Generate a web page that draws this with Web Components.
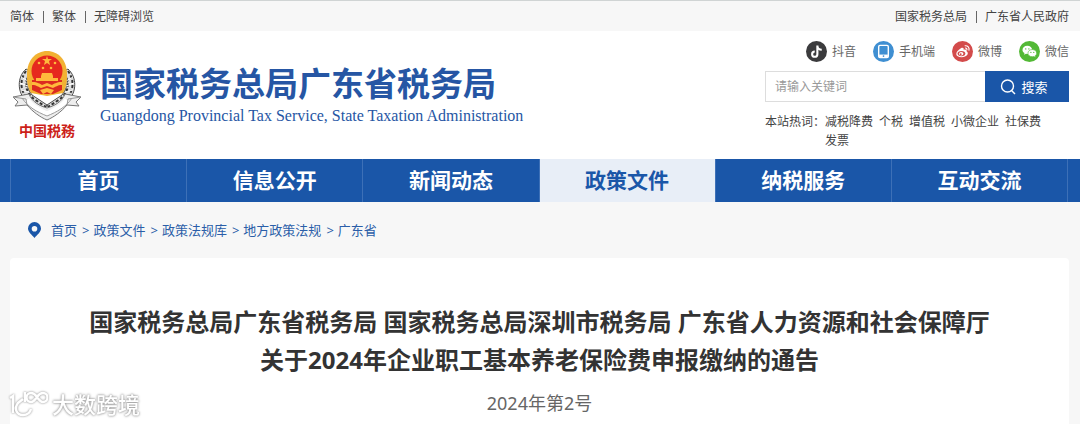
<!DOCTYPE html>
<html lang="zh-CN">
<head>
<meta charset="utf-8">
<meta name="viewport" content="width=device-width, initial-scale=1">
<title>国家税务总局广东省税务局</title>
<style>
    body {
        display: flex;
        flex-direction: column;
        margin: 0;
        min-height: 100vh;
        background-color: #f7f7f7;
        color: #444;
        font-family: "Noto Sans", "Noto Sans CJK SC", sans-serif;
        font-size: 12px;
    }

    a {
        text-decoration: none;
    }

    tax-article {
        flex: 1;
    }
</style>
</head>
<body>
    <tax-topbar>
        <tax-links>
            <a href="#">简体</a>
            <a href="#">繁体</a>
            <a href="#">无障碍浏览</a>
        </tax-links>
        <tax-links>
            <a href="#">国家税务总局</a>
            <a href="#">广东省人民政府</a>
        </tax-links>
    </tax-topbar>

    <tax-header>
        <tax-logo slot="logo">
            国家税务总局广东省税务局
            <span slot="english">Guangdong Provincial Tax Service, State Taxation Administration</span>
        </tax-logo>
        <tax-social icon="douyin" slot="social">抖音</tax-social>
        <tax-social icon="phone" slot="social">手机端</tax-social>
        <tax-social icon="weibo" slot="social">微博</tax-social>
        <tax-social icon="wechat" slot="social">微信</tax-social>
        <tax-search></tax-search>
        <tax-hotwords>
            <a href="#">减税降费</a>
            <a href="#">个税</a>
            <a href="#">增值税</a>
            <a href="#">小微企业</a>
            <a href="#">社保费</a>
            <a href="#">发票</a>
        </tax-hotwords>
    </tax-header>

    <tax-nav>
        <a href="#">首页</a>
        <a href="#">信息公开</a>
        <a href="#">新闻动态</a>
        <a href="#" class="active" aria-current="page">政策文件</a>
        <a href="#">纳税服务</a>
        <a href="#">互动交流</a>
    </tax-nav>

    <tax-breadcrumb>
        <a href="#">首页</a>
        <a href="#">政策文件</a>
        <a href="#">政策法规库</a>
        <a href="#">地方政策法规</a>
        <a href="#">广东省</a>
    </tax-breadcrumb>

    <tax-article>
        <span slot="title">国家税务总局广东省税务局 国家税务总局深圳市税务局 广东省人力资源和社会保障厅<br>关于2024年企业职工基本养老保险费申报缴纳的通告</span>
        2024年第2号
    </tax-article>

    <tax-watermark>大数跨境</tax-watermark>

<script>
class TaxElement extends HTMLElement {
    constructor() {
        super();
        this.attachShadow({mode: 'open'}).innerHTML = this.render();
    }
}

customElements.define('tax-topbar', class extends TaxElement {
    render() {
        return `
            <style>
                :host {
                    display: flex;
                    justify-content: space-between;
                    padding: 1px 11px 0 10px;
                    border-top: 1px solid #d0d4d4;
                    line-height: 29px;
                }
            </style>

            <slot></slot>
        `;
    }
});

customElements.define('tax-links', class extends TaxElement {
    render() {
        return `
            <style>
                :host {
                    display: flex;
                }

                ::slotted(a) {
                    display: flex;
                    align-items: center;
                    color: inherit;
                }

                ::slotted(a:not(:first-child))::before {
                    content: "";
                    width: 1px;
                    height: 12px;
                    margin: 0 8px 0 9px;
                    background-color: #666;
                }
            </style>

            <slot></slot>
        `;
    }
});

customElements.define('tax-header', class extends TaxElement {
    render() {
        return `
            <style>
                :host {
                    display: flex;
                    justify-content: space-between;
                    padding: 10px 11px 9px 12px;
                    background-color: #fff;
                }

                .tools {
                    width: 304px;
                }

                .social {
                    display: flex;
                    justify-content: flex-end;
                    gap: 17px;
                    margin-bottom: 9px;
                }
            </style>

            <slot name="logo"></slot>
            <div class="tools">
                <div class="social"><slot name="social"></slot></div>
                <slot></slot>
            </div>
        `;
    }
});

customElements.define('tax-logo', class extends TaxElement {
    render() {
        return `
            <style>
                :host {
                    display: flex;
                    gap: 18px;
                    padding-top: 10px;
                    color: #2656a4;
                }

                .emblem {
                    display: flex;
                    flex-direction: column;
                    align-items: center;
                    width: 70px;
                    color: #cc1f1a;
                    font-size: 14px;
                    font-weight: 700;
                    line-height: 20px;
                }

                h1 {
                    margin: 13px 0 0;
                    font-size: 33px;
                    line-height: 40px;
                }

                p {
                    margin: 0;
                    font: 16px/24px "Liberation Serif", serif;
                }
            </style>

            <div class="emblem">
                <svg width="70" height="70" viewBox="0 0 70 70" fill="none" aria-hidden="true">
                    <g stroke="#4b4b4b" stroke-width="1">
                        <path d="M14 18C5 26 5 41 14 50L31 60L35 54L20 44C14 36 13 28 18 20Z" fill="#ddd"/>
                        <path d="M56 18c9 8 9 23 0 32L39 60l-4-6 15-10c6-8 7-16 2-24Z" fill="#ddd"/>
                    </g>
                    <g stroke="#333" stroke-width="2" stroke-dasharray="3 2">
                        <path d="M14 20C6 31 9 44 20 51l13 7M17 23c-6 12-2 21 8 27l9 6"/>
                        <path d="M56 20c8 11 5 24-6 31l-13 7M53 23c6 12 2 21-8 27l-9 6"/>
                    </g>
                    <path d="M9 26l7 4M8 32l8 3M9 39l8 2M12 45l7 1M61 26l-7 4M62 32l-8 3M61 39l-8 2M58 45l-7 1" stroke="#fff" stroke-width="1"/>
                    <path d="M19 42c-4-6-4-13-4-19C15 9 24 0 35 0s20 9 20 23c0 6 0 13-4 19L35 45Z" fill="#f2b233"/>
                    <circle cx="35" cy="20" r="15.500" fill="#e6291e"/>
                    <path d="M20 29h30v10l-9 4H29l-9-4Z" fill="#dc2a20"/>
                    <path d="M35 5l1 3h4l-3 2 1 4-3-2-3 2 1-4-3-2h4Z" fill="#ffb93c"/>
                    <g fill="#ffb93c">
                        <circle cx="27" cy="12" r="1.300"/>
                        <circle cx="43" cy="12" r="1.300"/>
                        <circle cx="31" cy="17" r="1.300"/>
                        <circle cx="39" cy="17" r="1.300"/>
                        <path d="M30 22h10l1 3H29ZM29 25h12v2h5v3H24v-3h5Z"/>
                        <path d="M20 31c6 0 8 2 10 3l5-2 5 2c2-1 4-3 10-3v3c-5 0-6 2-9 3l-6-2-6 2c-3-1-4-3-9-3ZM28 39l7-2 7 2-3 4-4-2-4 2Z"/>
                    </g>
                    <path d="M1 46l16-3c3 8 11 12 18 14 7-2 15-6 18-14l16 3-5 5 3 4-12-1C49 61 42 66 35 69 28 66 21 61 15 54L3 55l3-4Z" fill="#eee" stroke="#777" stroke-width="1"/>
                    <path d="M15 49c5 7 13 11 20 14 7-3 15-7 20-14" stroke="#fff" stroke-width="5"/>
                    <path d="M1 46l13 2 1 6M69 46l-13 2-1 6M10 47c6 9 15 14 25 18 10-4 19-9 25-18" stroke="#999" stroke-width="1"/>
                </svg>
                <span>中国税務</span>
            </div>
            <div>
                <h1><slot></slot></h1>
                <p><slot name="english"></slot></p>
            </div>
        `;
    }
});

const socialIcons = {
    douyin: `
        <circle cx="12" cy="12" r="12" fill="#3b3b3d"/>
        <path d="M13 5v10a3 3 0 1 1-3-3M13 5c0 3 2 5 5 5" fill="none" stroke="#fff" stroke-width="2.4"/>`,
    phone: `
        <circle cx="12" cy="12" r="12" fill="#3f8fd2"/>
        <rect x="6.5" y="5" width="11" height="14" rx="1.5" fill="none" stroke="#fff" stroke-width="1.6"/>
        <path d="M7 15.500h10V19H7Z" fill="#fff"/>
        <circle cx="12" cy="17.200" r="1" fill="#3f8fd2"/>`,
    weibo: `
        <circle cx="12" cy="12" r="12" fill="#d34b4b"/>
        <path d="M10.500 8c2-.8 3.300 0 2.800 1.900 2.300-.8 4 .1 3.300 1.900 3.500 2.200.4 6.700-5.600 6.700-7.500 0-8.500-5.600-.5-10.500Z" fill="#fff"/>
        <ellipse cx="10.800" cy="14.300" rx="4.400" ry="3" fill="#d34b4b"/>
        <ellipse cx="10.500" cy="14.500" rx="2.500" ry="2" fill="#fff"/>
        <circle cx="10" cy="15" r="1" fill="#d34b4b"/>
        <path d="M14.500 5.500c3.500-.6 5.800 2.200 4.800 5.500M14.800 8c1.600-.2 2.500.9 2.200 2.300" fill="none" stroke="#fff" stroke-width="1.300"/>`,
    wechat: `
        <circle cx="12" cy="12" r="12" fill="#53b936"/>
        <path d="M9.500 5.500c3.200 0 5.500 2 5.500 4.700s-2.300 4.600-5.500 4.600l-1.500-.2-2.200 1.200.5-2C4.800 12.900 4 11.700 4 10.200c0-2.700 2.300-4.700 5.500-4.700Z" fill="#fff"/>
        <path d="M15.200 9.800c2.900 0 5 1.800 5 4.100 0 1.300-.7 2.300-1.700 3l.4 1.800-2-1-1.700.2c-2.900 0-5-1.700-5-4s2.100-4.100 5-4.100Z" fill="#fff" stroke="#53b936" stroke-width=".7"/>
        <g fill="#53b936"><circle cx="7.700" cy="9" r=".8"/><circle cx="11.300" cy="9" r=".8"/><circle cx="13.600" cy="13" r=".7"/><circle cx="16.900" cy="13" r=".7"/></g>`
};

customElements.define('tax-social', class extends TaxElement {
    render() {
        return `
            <style>
                :host {
                    display: block;
                    color: #666;
                }

                a {
                    display: flex;
                    align-items: center;
                    gap: 5px;
                    color: inherit;
                    line-height: 21px;
                    text-decoration: none;
                }
            </style>

            <a href="#">
                <svg width="21" height="21" viewBox="0 0 24 24" aria-hidden="true">${socialIcons[this.getAttribute('icon')]}</svg>
                <slot></slot>
            </a>
        `;
    }
});

customElements.define('tax-search', class extends TaxElement {
    render() {
        return `
            <style>
                :host {
                    display: block;
                }

                form {
                    display: flex;
                    height: 31px;
                }

                input {
                    flex: 1;
                    min-width: 0;
                    box-sizing: border-box;
                    padding: 0 9px;
                    border: 1px solid #ddd;
                    border-right: 0;
                    border-radius: 0;
                    background-color: #fff;
                    color: #444;
                    font: inherit;
                    outline: none;
                }

                input::placeholder {
                    color: #999;
                }

                button {
                    display: flex;
                    align-items: center;
                    justify-content: center;
                    gap: 5px;
                    width: 84px;
                    padding: 0 6px 0 0;
                    border: 0;
                    background-color: #1a56a8;
                    color: #fff;
                    font: inherit;
                    font-size: 13px;
                    cursor: pointer;
                }
            </style>

            <form role="search" onsubmit="return false">
                <input type="text" placeholder="请输入关键词" aria-label="请输入关键词">
                <button type="submit">
                    <svg width="16" height="16" viewBox="0 0 16 16" fill="none" stroke="#fff" stroke-width="1.400" aria-hidden="true">
                        <circle cx="7.500" cy="7" r="6"/>
                        <path d="M11.500 11.500L15 15"/>
                    </svg>
                    搜索
                </button>
            </form>
        `;
    }
});

customElements.define('tax-hotwords', class extends TaxElement {
    render() {
        return `
            <style>
                :host {
                    display: flex;
                    margin-top: 10px;
                    line-height: 19px;
                }

                .label {
                    flex: none;
                }

                .words {
                    display: flex;
                    flex-wrap: wrap;
                    column-gap: 6px;
                }

                ::slotted(a) {
                    color: inherit;
                }
            </style>

            <span class="label">本站热词：</span>
            <div class="words"><slot></slot></div>
        `;
    }
});

customElements.define('tax-nav', class extends TaxElement {
    render() {
        return `
            <style>
                :host {
                    display: block;
                    padding: 0 12px 0 10px;
                    background-color: #1a56a8;
                }

                nav {
                    display: grid;
                    grid-template-columns: repeat(6, 1fr);
                    border-right: 1px solid #3d70b7;
                }

                ::slotted(a) {
                    border-left: 1px solid #3d70b7;
                    color: #fff;
                    font-size: 21px;
                    font-weight: 700;
                    line-height: 43px;
                    text-align: center;
                }

                ::slotted(a.active) {
                    background-color: #e8eef7;
                    color: #1a56a8;
                }
            </style>

            <nav><slot></slot></nav>
        `;
    }
});

customElements.define('tax-breadcrumb', class extends TaxElement {
    render() {
        return `
            <style>
                :host {
                    display: flex;
                    align-items: center;
                    gap: 10px;
                    padding: 0 28px;
                    color: #2b5ea8;
                    font-size: 13px;
                    line-height: 56px;
                }

                nav {
                    display: flex;
                }

                ::slotted(a) {
                    color: inherit;
                }

                ::slotted(a:not(:first-child))::before {
                    content: ">";
                    margin: 0 4px 0 5px;
                }
            </style>

            <svg width="13" height="16" viewBox="0 0 13 16" aria-hidden="true">
                <path d="M6.500 0A6.500 6.500 0 0 0 0 6.500C0 10 4 13 6.500 16 9 13 13 10 13 6.500A6.500 6.500 0 0 0 6.500 0Z" fill="#1a56a8"/>
                <circle cx="6.500" cy="6.700" r="2.800" fill="#f7f7f7"/>
            </svg>
            <nav aria-label="当前位置"><slot></slot></nav>
        `;
    }
});

customElements.define('tax-article', class extends TaxElement {
    render() {
        return `
            <style>
                :host {
                    display: block;
                    margin: 0 11px 0 10px;
                    padding: 45px 20px 8px;
                    border-radius: 4px 4px 0 0;
                    background-color: #fff;
                    text-align: center;
                }

                h2 {
                    margin: 0;
                    color: #333;
                    font-size: 24px;
                    line-height: 38px;
                }

                p {
                    margin: 12px 0 0;
                    color: #666;
                    font-size: 18px;
                    line-height: 24px;
                }
            </style>

            <h2><slot name="title"></slot></h2>
            <p><slot></slot></p>
        `;
    }
});

customElements.define('tax-watermark', class extends TaxElement {
    render() {
        return `
            <style>
                /* stamp over the lower left corner of the page */
                :host {
                    position: fixed;
                    left: 8px;
                    bottom: 5px;
                    display: flex;
                    align-items: center;
                    gap: 4px;
                    color: #fff;
                    font-size: 22px;
                    font-weight: 500;
                    line-height: 30px;
                    text-shadow: 0 0 2px #999, 0 0 3px #999;
                    pointer-events: none;
                }

                svg {
                    filter: drop-shadow(0 0 1px #888);
                }
            </style>

            <svg width="40" height="30" viewBox="0 0 40 30" fill="none" stroke="#fff" stroke-width="2.500" aria-hidden="true">
                <path d="M2 9l3-2v17M15 10l-5 4c-4 5-2 12 5 12 4 0 7-2 8-6M17 3v10"/>
                <path d="M29 8c-2-3-4-4-6-4a4 4 0 0 0 0 9c2 0 4-2 6-5s3-4 6-4a4 4 0 0 1 0 9c-2 0-4-2-6-5Z"/>
            </svg>
            <slot></slot>
        `;
    }
});
</script>
</body>
</html>
